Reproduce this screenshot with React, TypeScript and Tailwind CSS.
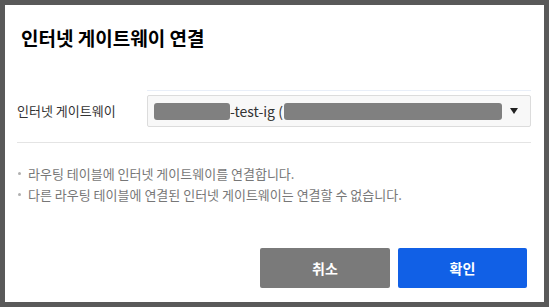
import React from 'react';

const notes = [
    '라우팅 테이블에 인터넷 게이트웨이를 연결합니다.',
    '다른 라우팅 테이블에 연결된 인터넷 게이트웨이는 연결할 수 없습니다.',
];

const App: React.FC = () => {
    return (
        <div className="w-[549px] h-[307px] bg-[#595959] p-[5px] font-['Noto_Sans_CJK_KR',sans-serif]">
            <div className="bg-white h-full flex flex-col">
                <div className="pl-[16px] pt-[20px] text-[19px] leading-[26px] font-bold text-black">
                    인터넷 게이트웨이 연결
                </div>

                <div className="px-[12px] mt-[39px]">
                    <div className="flex items-end">
                        <div className="w-[130px] h-[32px] flex items-center text-[13px] text-[#333]">인터넷 게이트웨이</div>
                        <div className="flex-1 mr-[1px]">
                            <div className="h-px bg-[#e8eef8] mb-[4px]" />
                            <div className="h-[32px] bg-[#f8f8f8] border border-[#dcdcdc] rounded-[2px] flex items-center pl-[6px] pr-[12px] text-[14px] text-[#333]">
                                <span className="w-[76px] h-[17px] bg-[#808080] rounded-[3px]" />
                                <span className="leading-none">-test-ig (</span>
                                <span className="w-[218px] h-[17px] bg-[#808080] rounded-[3px] ml-[1px]" />
                                <span className="ml-auto w-0 h-0 border-l-[4px] border-r-[4px] border-t-[6px] border-l-transparent border-r-transparent border-t-[#222]" />
                            </div>
                        </div>
                    </div>
                    <div className="h-px bg-[#e4e4e4] mt-[15px] mr-[1px]" />
                    <ul className="mt-[20px] text-[13px] leading-[21px] text-[#777]">
                        {notes.map((n, i) => (
                            <li key={i} className="flex items-center">
                                <span className="w-[3px] h-[3px] rounded-full bg-[#b0b0b0] mx-[1px] mr-[7px]" />
                                {n}
                            </li>
                        ))}
                    </ul>
                </div>

                <div className="mt-auto flex justify-end gap-[8px] pr-[17px] pb-[14px]">
                    <button className="w-[130px] h-[40px] bg-[#7a7a7a] text-white text-[14px] font-bold rounded-[2px]">취소</button>
                    <button className="w-[129px] h-[40px] bg-[#1160e6] text-white text-[14px] font-bold rounded-[2px]">확인</button>
                </div>
            </div>
        </div>
    );
};

export default App;
